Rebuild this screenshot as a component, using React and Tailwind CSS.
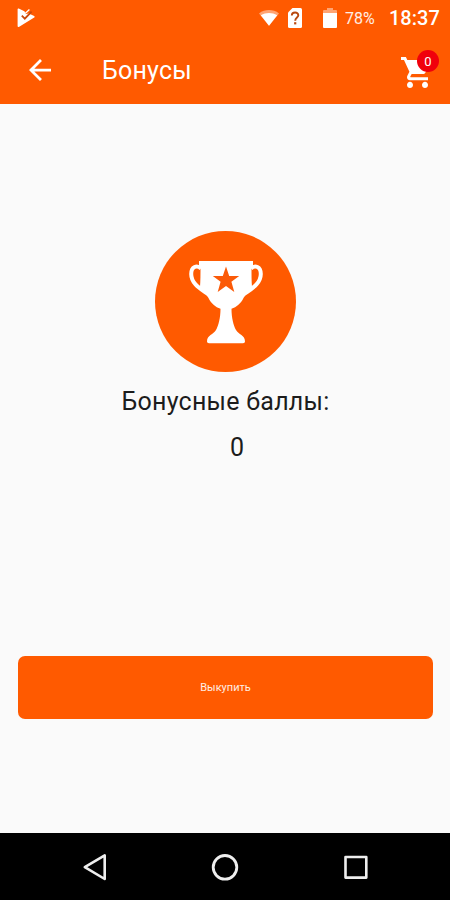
import React from 'react';

const PlayCheckIcon = () => (
  <svg className="w-[18px] h-5" viewBox="0 0 18 20" fill="none">
    <path d="M1.4 1.2 7 4 8 7 12 6.4 16.8 8.8 1.4 18.2Z" fill="#fff" stroke="#fff" strokeWidth="1.6" strokeLinejoin="round" />
    <path d="m4.8 7.6 3 3L14.6 3.6" stroke="#c94a0c" strokeWidth="1.8" />
    <path d="M8.2 5.4 12.4 1.6" stroke="#fff" strokeWidth="1.4" />
  </svg>
);

const WifiIcon = () => (
  <svg className="w-5 h-4" viewBox="0 0 20 16">
    <path d="M0 3.4C6 -1 14 -1 20 3.4L10 15.8Z" fill="#fff" fillOpacity=".45" />
    <path d="M1.8 5.2C7 2.4 13 2.4 18.2 5.2L10 15.8Z" fill="#fff" />
  </svg>
);

const SimIcon = () => (
  <svg className="w-[14px] h-5" viewBox="0 0 14 20" fill="none">
    <path d="M4.5 0H12.5Q14 0 14 1.5V18.5Q14 20 12.5 20H1.5Q0 20 0 18.5V4.5Z" fill="#fff" />
    <path d="M3.8 7.6C3.8 3.3 10.5 3.5 10.3 7.4C10.2 9.5 7.2 9.7 7.2 12.8" stroke="#b8480f" strokeWidth="1.9" />
    <path d="M6.1 14.2h2.2v2.2H6.1z" fill="#b8480f" />
  </svg>
);

const BatteryIcon = () => (
  <svg className="w-[14px] h-5" viewBox="0 0 14 20" fill="#fff">
    <path d="M4 0H10V2H13Q14 2 14 3V5H0V3Q0 2 1 2H4Z" fillOpacity=".45" />
    <path d="M0 5H14V19Q14 20 13 20H1Q0 20 0 19Z" />
  </svg>
);

const TrophyIcon = () => (
  <svg className="w-[141px] h-[141px]" viewBox="0 0 141 141" fill="none">
    <circle cx="70.5" cy="70.5" r="70.5" fill="#ff5a00" />
    {/* Ручки кубка */}
    <path d="M46 37.5C42 33.5 36.2 35.5 36.2 43C36.2 53 46 58 54 64" stroke="#fff" strokeWidth="4" />
    <path d="M96 37.5C100 33.5 105.8 35.5 105.8 43C105.8 53 96 58 88 64" stroke="#fff" strokeWidth="4" />
    {/* Чаша и ножка */}
    <path
      d="M44 30H98V35H96.5C96.5 43 96.5 50 97 56C93.5 59.5 91 63 88.5 67C86 72.5 81.5 76 76.5 77.8C76.5 87 78.5 94.5 81 99C83.5 103.5 90 104 90 110.5Q90 112.3 88 112.3H54Q52 112.3 52 110.5C52 104 58.5 103.5 61 99C63.5 94.5 65.5 87 65.5 77.8C60.5 76 56 72.5 53.5 67C51 63 48.5 59.5 45 56C45.5 50 45.5 43 45.5 35H44Z"
      fill="#fff"
    />
    <path d="M71 35.6 74.2 45H84.2L76.4 50.8 79.3 60.9 71 54.9 62.7 60.9 65.6 50.8 57.8 45H67.8Z" fill="#fb5a08" />
  </svg>
);

const StatusBar = () => (
  <div className="flex h-9 items-center pl-[17px] pr-[11px] text-white">
    <PlayCheckIcon />
    <div className="ml-auto flex items-center">
      <WifiIcon />
      <span className="ml-[9px]"><SimIcon /></span>
      <span className="ml-[21px]"><BatteryIcon /></span>
      <span className="ml-2 w-[31px] pt-px text-[16px] leading-none whitespace-nowrap text-white/90">78%</span>
      <span className="ml-[13px] w-[50px] text-[20px] font-medium leading-none">18:37</span>
    </div>
  </div>
);

const AppBar = () => (
  <header className="flex h-[68px] items-center pl-[29px] pr-[11px] text-white">
    <svg className="h-[22px] w-[22px]" viewBox="4 4 16 16" fill="currentColor">
      <path d="M20 11H7.83l5.59-5.59L12 4l-8 8 8 8 1.41-1.41L7.83 13H20v-2z" />
    </svg>
    <h1 className="ml-[51px] pt-px text-[25px] leading-none tracking-[0.2px]">Бонусы</h1>
    <div className="relative ml-auto h-[32px] w-[38px]">
      <svg className="mt-[3px] h-[31px] w-[30px]" viewBox="1 2 20 20" preserveAspectRatio="none" fill="currentColor">
        <path d="M7 18c-1.1 0-1.99.9-1.99 2S5.9 22 7 22s2-.9 2-2-.9-2-2-2zM1 2v2h2l3.6 7.59-1.35 2.45c-.16.28-.25.61-.25.96 0 1.1.9 2 2 2h12v-2H7.42c-.14 0-.25-.11-.25-.25l.03-.12.9-1.63h7.45c.75 0 1.41-.41 1.75-1.03l3.58-6.49c.08-.14.12-.31.12-.48 0-.55-.45-1-1-1H5.21l-.94-2H1zm16 16c-1.1 0-1.99.9-1.99 2s.89 2 1.99 2 2-.9 2-2-.9-2-2-2z" />
      </svg>
      <span className="absolute -top-[4px] right-0 flex h-[22px] w-[22px] items-center justify-center rounded-full bg-[#f0000c] text-[13px] leading-none">
        0
      </span>
    </div>
  </header>
);

const NavigationBar = () => (
  <nav className="flex h-[67px] items-center justify-between bg-black pl-[82px] pr-[82px]">
    <svg className="h-7 w-6" viewBox="0 0 24 28" fill="none" stroke="#eee" strokeWidth="2.6" strokeLinejoin="round">
      <path d="M22.7 2.4V26L2.8 14.2Z" />
    </svg>
    <svg className="h-7 w-7" viewBox="0 0 28 28" fill="none" stroke="#eee" strokeWidth="2.8">
      <circle cx="14" cy="14.3" r="11.8" />
    </svg>
    <svg className="h-6 w-6" viewBox="0 0 24 24" fill="none" stroke="#eee" strokeWidth="2.6" strokeLinejoin="round">
      <path d="M1.5 2H22.3V22.6H1.5Z" />
    </svg>
  </nav>
);

export default function App() {
  return (
    <div className="flex h-[900px] w-[450px] flex-col overflow-hidden bg-[#fafafa] font-['Roboto',sans-serif]">
      <div className="bg-[#ff5a00]">
        <StatusBar />
        <AppBar />
      </div>

      <main className="flex flex-1 flex-col items-center pl-[18px] pr-[17px] pt-[127px]">
        <TrophyIcon />
        <p className="mt-[14px] text-[25px] leading-[32px] tracking-[0.25px] whitespace-nowrap text-[#1c1c1c]">Бонусные баллы:</p>
        <p className="mt-[14px] ml-[23px] text-[25px] leading-[32px] text-[#1c1c1c]">0</p>
        <button className="mt-[192px] h-[63px] w-full rounded-[7px] bg-[#ff5a00] pt-[2px] text-[11px] text-white/90">
          Выкупить
        </button>
      </main>

      <NavigationBar />
    </div>
  );
}
